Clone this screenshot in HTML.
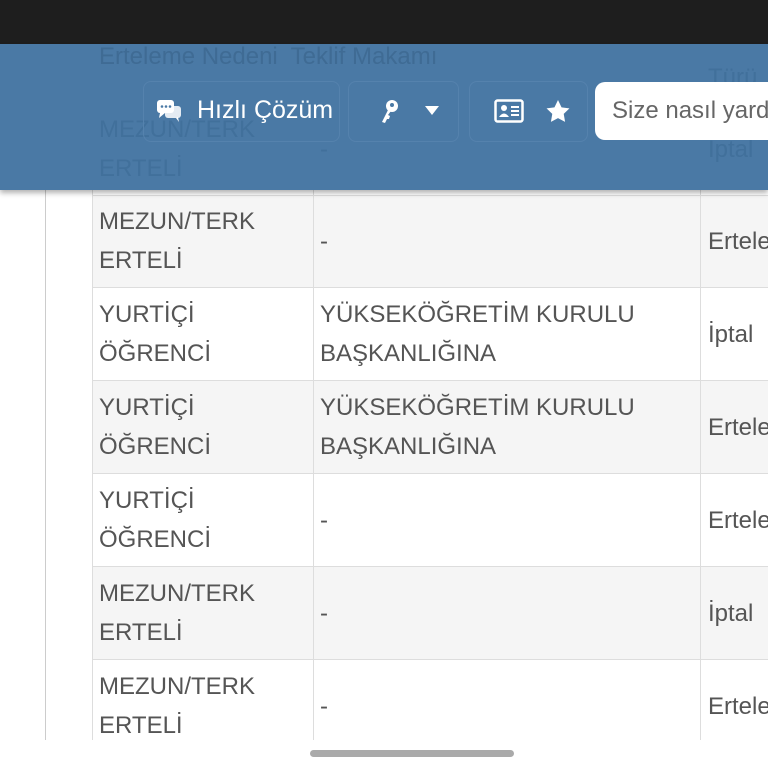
<!DOCTYPE html>
<html><head><meta charset="utf-8"><style>
body{margin:0;width:768px;height:768px;overflow:hidden;background:#fff;font-family:"Liberation Sans",sans-serif;position:relative;color:#555}
.a{position:absolute}
.t{font-size:24px;line-height:39px;white-space:nowrap}
.row{position:absolute;left:92px;width:700px;border-top:1px solid #ddd}
</style></head><body>
<div class="a" style="left:45px;top:190px;width:1px;height:550px;background:#ccc"></div>

<div class="row" style="top:195px;height:92px;background:#f5f5f5"></div>
<div class="row" style="top:287px;height:93px"></div>
<div class="row" style="top:380px;height:93px;background:#f5f5f5"></div>
<div class="row" style="top:473px;height:93px"></div>
<div class="row" style="top:566px;height:93px;background:#f5f5f5"></div>
<div class="row" style="top:659px;height:81px"></div>
<div class="a" style="left:92px;top:190px;width:1px;height:550px;background:#ddd"></div>
<div class="a" style="left:313px;top:190px;width:1px;height:550px;background:#ddd"></div>
<div class="a" style="left:700px;top:190px;width:1px;height:550px;background:#ddd"></div>

<div class="a t" style="left:99px;top:202px">MEZUN/TERK<br>ERTELİ</div>
<div class="a t" style="left:320px;top:222px">-</div>
<div class="a t" style="left:708px;top:222px">Ertele</div>

<div class="a t" style="left:99px;top:295px">YURTİÇİ<br>ÖĞRENCİ</div>
<div class="a t" style="left:320px;top:295px">YÜKSEKÖĞRETİM KURULU<br>BAŞKANLIĞINA</div>
<div class="a t" style="left:708px;top:315px">İptal</div>

<div class="a t" style="left:99px;top:388px">YURTİÇİ<br>ÖĞRENCİ</div>
<div class="a t" style="left:320px;top:388px">YÜKSEKÖĞRETİM KURULU<br>BAŞKANLIĞINA</div>
<div class="a t" style="left:708px;top:408px">Ertele</div>

<div class="a t" style="left:99px;top:481px">YURTİÇİ<br>ÖĞRENCİ</div>
<div class="a t" style="left:320px;top:501px">-</div>
<div class="a t" style="left:708px;top:501px">Ertele</div>

<div class="a t" style="left:99px;top:574px">MEZUN/TERK<br>ERTELİ</div>
<div class="a t" style="left:320px;top:594px">-</div>
<div class="a t" style="left:708px;top:594px">İptal</div>

<div class="a t" style="left:99px;top:667px">MEZUN/TERK<br>ERTELİ</div>
<div class="a t" style="left:320px;top:687px">-</div>
<div class="a t" style="left:708px;top:687px">Ertele</div>

<div class="a" style="left:0;top:740px;width:768px;height:28px;background:#fff"></div>
<div class="a" style="left:310px;top:750px;width:204px;height:7px;border-radius:4px;background:#aaa"></div>

<!-- header -->
<div class="a" style="left:0;top:0;width:768px;height:44px;background:#1e1e1e"></div>
<div class="a" style="left:0;top:44px;width:768px;height:146px;background:#4a79a5;box-shadow:0 3px 5px rgba(0,0,0,.3);overflow:hidden">
  <div class="a t" style="left:99px;top:-7px;color:#3f6b94">Erteleme Nedeni&nbsp; Teklif Makamı</div>
  <div class="a t" style="left:99px;top:66px;color:#41709b">MEZUN/TERK<br>ERTELİ</div>
  <div class="a t" style="left:320px;top:86px;color:#41709b">-</div>
  <div class="a t" style="left:708px;top:14px;color:#41709b">Türü</div>
  <div class="a t" style="left:708px;top:86px;color:#41709b">İptal</div>
  <div class="a" style="left:143px;top:37px;width:195px;height:59px;border:1px solid #5582ad;border-radius:8px"></div>
  <div class="a" style="left:348px;top:37px;width:109px;height:59px;border:1px solid #5582ad;border-radius:8px"></div>
  <div class="a" style="left:469px;top:37px;width:117px;height:59px;border:1px solid #5582ad;border-radius:8px"></div>
  <svg class="a" style="left:156px;top:55px" width="26" height="24" viewBox="0 0 26 24"><rect x="1" y="1" width="17" height="13" rx="3" fill="#fff"/><path d="M4 14 L3 19 L9 14Z" fill="#fff"/><rect x="9" y="7" width="16" height="12" rx="3" fill="#fff" opacity=".85"/><path d="M20 19 L23 23 L22 18Z" fill="#fff"/><circle cx="6" cy="7.5" r="1.3" fill="#4a79a5"/><circle cx="10" cy="7.5" r="1.3" fill="#4a79a5"/><circle cx="14" cy="7.5" r="1.3" fill="#4a79a5"/></svg>
  <div class="a t" style="left:197px;top:47px;color:#fff;font-size:25px">Hızlı Çözüm</div>
  <svg class="a" style="left:378px;top:54px" width="24" height="26" viewBox="0 0 24 26"><circle cx="14" cy="8" r="6" fill="#fff"/><circle cx="14" cy="7" r="2" fill="#4a79a5"/><path d="M10 12 L4 24 L7 25 L9 21 L11 21 L12 18 L10 17 L13 13Z" fill="#fff"/></svg>
  <svg class="a" style="left:425px;top:62px" width="14" height="9"><path d="M0 0H14L7 9Z" fill="#fff"/></svg>
  <svg class="a" style="left:494px;top:55px" width="30" height="24" viewBox="0 0 30 24"><rect x="1.5" y="1.5" width="27" height="21" rx="2" fill="none" stroke="#fff" stroke-width="2.5"/><circle cx="10" cy="9" r="3" fill="#fff"/><path d="M5 18 Q10 11 15 18Z" fill="#fff"/><rect x="17" y="7" width="8" height="2" fill="#fff"/><rect x="17" y="11" width="8" height="2" fill="#fff"/><rect x="17" y="15" width="8" height="2" fill="#fff"/></svg>
  <svg class="a" style="left:545px;top:55px" width="26" height="25" viewBox="0 0 24 24"><path d="M12 1l3.4 7 7.6 1-5.5 5.3 1.3 7.6L12 18.3 5.2 21.9l1.3-7.6L1 9l7.6-1z" fill="#fff"/></svg>
  <div class="a" style="left:595px;top:38px;width:190px;height:58px;background:#fff;border-radius:10px"></div>
  <div class="a t" style="left:612px;top:47px;color:#666">Size nasıl yardım</div>
</div>
</body></html>
